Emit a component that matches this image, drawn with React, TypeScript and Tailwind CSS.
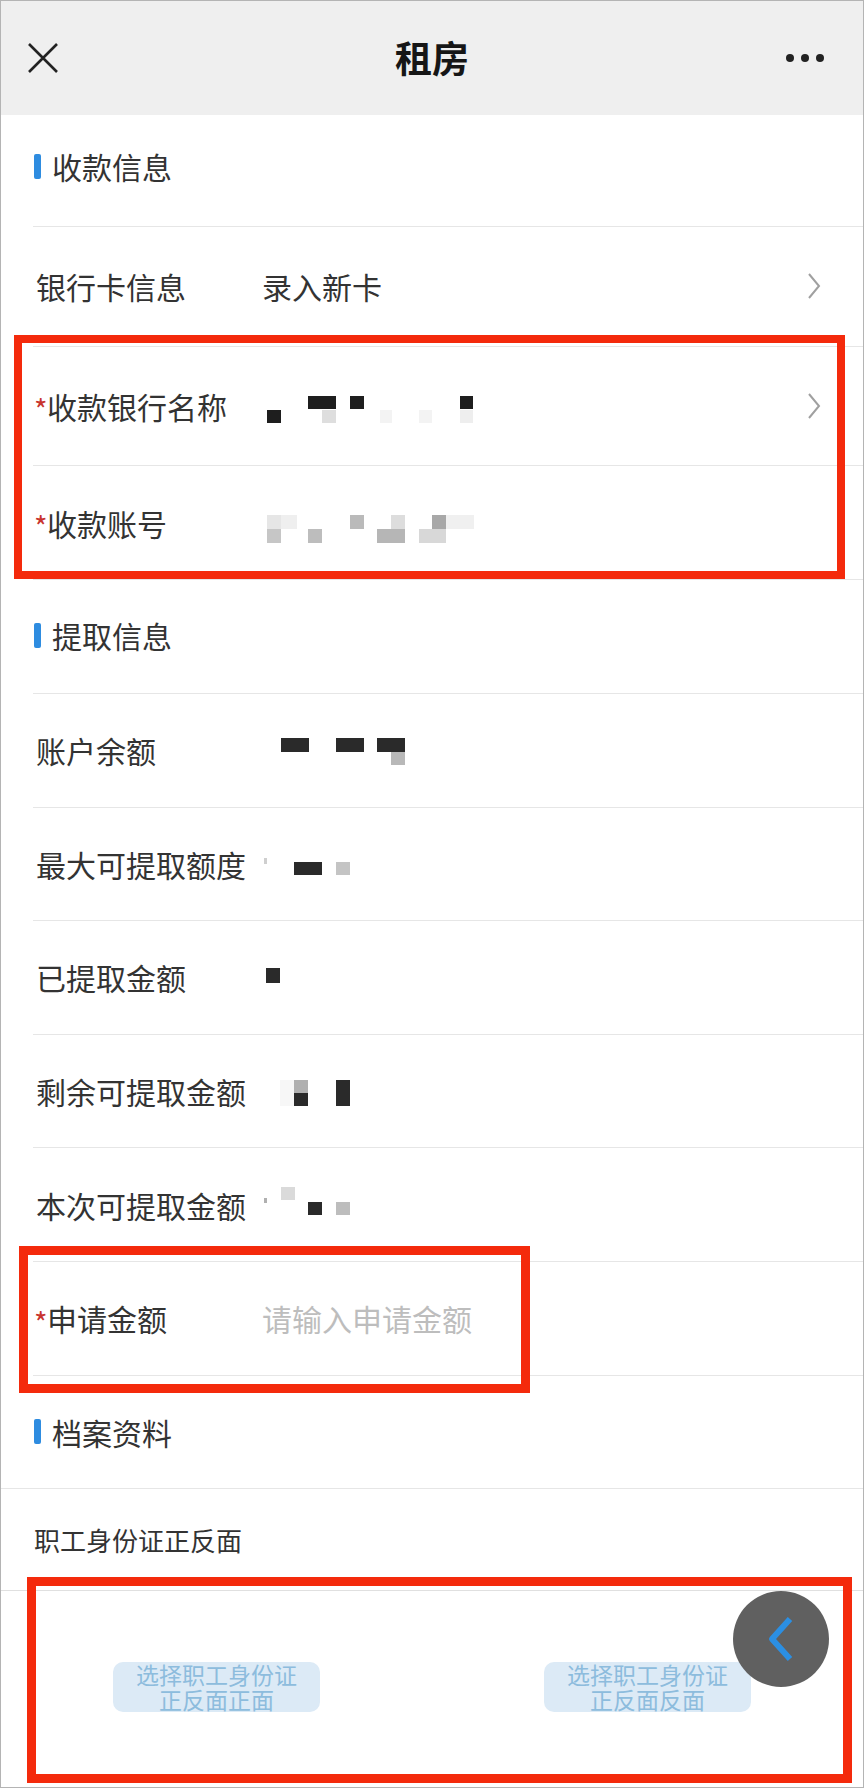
import React from 'react';

type Cell = [number, number, number, number, string];

const FONT = { fontFamily: '"Noto Sans CJK SC", "Noto Sans", sans-serif' };

function Mosaic({ cells }: { cells: Cell[] }) {
  return (
    <svg width="240" height="40" viewBox="0 0 240 40" className="shrink-0">
      {cells.map(([x, y, w, h, c], i) => (
        <rect key={i} x={x} y={y} width={w} height={h} fill={c} />
      ))}
    </svg>
  );
}

function Chevron() {
  return (
    <svg width="16" height="28" viewBox="0 0 16 28" className="ml-auto shrink-0">
      <path d="M3 2 L13 14 L3 26" fill="none" stroke="#a0a0a0" strokeWidth="2" />
    </svg>
  );
}

function Section({ title, h, full }: { title: string; h: string; full?: boolean }) {
  return (
    <div
      className={
        full
          ? `flex ${h} items-center border-b border-[#e6e6e6] pl-[33px]`
          : `ml-[32px] flex ${h} items-center border-b border-[#e6e6e6] pl-[1px]`
      }
    >
      <span className="mr-[11px] h-[25px] w-[7px] rounded-[2px] bg-[#2e8ce0]" />
      <span className="text-[30px] leading-none text-[#333]">{title}</span>
    </div>
  );
}

function Row({
  label,
  h,
  required,
  children,
  arrow,
}: {
  label: string;
  h: string;
  required?: boolean;
  children?: React.ReactNode;
  arrow?: boolean;
}) {
  return (
    <div className={`ml-[32px] flex ${h} items-center border-b border-[#e6e6e6] pl-[3px] pr-[41px]`}>
      <div className="flex w-[226px] shrink-0 items-center">
        {required && (
          <span className="-ml-[2px] w-[13px] translate-y-[3px] text-[29px] leading-none text-[#c8342f]">*</span>
        )}
        <span className="text-[30px] leading-none text-[#333]">{label}</span>
      </div>
      {children}
      {arrow && <Chevron />}
    </div>
  );
}

function UploadBtn({ line2 }: { line2: string }) {
  return (
    <div className="flex flex-1 items-center justify-center">
      <div className="flex h-[50px] w-[207px] flex-col items-center justify-center rounded-[10px] bg-[#dceaf6] text-[23px] leading-[25px] text-[#8dbcdd]">
        <span>选择职工身份证</span>
        <span>{line2}</span>
      </div>
    </div>
  );
}

export default function App() {
  return (
    <div className="relative h-[1788px] w-[864px] overflow-hidden border-x border-y border-[#b4b4b4] bg-white" style={FONT}>
      {/* header */}
      <div className="relative flex h-[114px] items-center justify-between bg-[#efefef] px-[27px]">
        <svg width="30" height="30" viewBox="0 0 30 30">
          <path d="M1 1 L29 29 M29 1 L1 29" stroke="#222" strokeWidth="2.6" />
        </svg>
        <span className="absolute left-1/2 -translate-x-1/2 text-[37px] font-semibold text-[#161616]">租房</span>
        <div className="mr-[12px] flex gap-[7px]">
          <span className="h-[8px] w-[8px] rounded-full bg-[#222]" />
          <span className="h-[8px] w-[8px] rounded-full bg-[#222]" />
          <span className="h-[8px] w-[8px] rounded-full bg-[#222]" />
        </div>
      </div>

      <Section title="收款信息" h="h-[112px] pb-[9px]" />
      <Row label="银行卡信息" h="h-[119.5px]" arrow>
        <span className="text-[30px] leading-none text-[#333]">录入新卡</span>
      </Row>
      <Row label="收款银行名称" h="h-[119.5px]" required arrow>
        <Mosaic
          cells={[
            [5, 24, 14, 13, '#1e1e1e'],
            [46, 10, 28, 13, '#1e1e1e'],
            [60, 24, 14, 13, '#dedede'],
            [88, 10, 14, 13, '#1e1e1e'],
            [118, 24, 12, 13, '#f3f3f3'],
            [157, 24, 13, 13, '#f3f3f3'],
            [198, 10, 13, 13, '#1e1e1e'],
            [198, 24, 13, 13, '#eeeeee'],
          ]}
        />
      </Row>
      <Row label="收款账号" h="h-[114px]" required>
        <Mosaic
          cells={[
            [5, 12, 14, 14, '#e6e6e6'],
            [5, 26, 14, 14, '#c6c6c6'],
            [19, 12, 16, 14, '#efefef'],
            [46, 26, 14, 14, '#bdbdbd'],
            [88, 12, 14, 14, '#bababa'],
            [115, 26, 28, 14, '#b6b6b6'],
            [129, 12, 14, 14, '#dddddd'],
            [157, 26, 27, 14, '#d8d8d8'],
            [170, 12, 14, 14, '#a8a8a8'],
            [184, 12, 28, 14, '#f0f0f0'],
          ]}
        />
      </Row>

      <Section title="提取信息" h="h-[114px] pb-[3px]" />
      <Row label="账户余额" h="h-[113.6px]">
        <Mosaic
          cells={[
            [19, 8, 28, 14, '#2a2a2a'],
            [74, 8, 28, 14, '#2a2a2a'],
            [115, 8, 28, 14, '#2a2a2a'],
            [129, 22, 14, 13, '#b8b8b8'],
          ]}
        />
      </Row>
      <Row label="最大可提取额度" h="h-[113.6px]">
        <Mosaic
          cells={[
            [2, 14, 3, 6, '#cfcfcf'],
            [32, 18, 28, 13, '#2a2a2a'],
            [74, 18, 14, 13, '#c4c4c4'],
          ]}
        />
      </Row>
      <Row label="已提取金额" h="h-[113.6px]">
        <Mosaic cells={[[4, 11, 14, 15, '#2a2a2a']]} />
      </Row>
      <Row label="剩余可提取金额" h="h-[113.6px]">
        <Mosaic
          cells={[
            [32, 9, 14, 13, '#b0b0b0'],
            [32, 22, 14, 13, '#2a2a2a'],
            [74, 9, 14, 26, '#2a2a2a'],
            [18, 9, 14, 26, '#f7f7f7'],
          ]}
        />
      </Row>
      <Row label="本次可提取金额" h="h-[113.6px]">
        <Mosaic
          cells={[
            [2, 13, 3, 5, '#b0b0b0'],
            [19, 2, 14, 13, '#dadada'],
            [46, 17, 14, 13, '#2a2a2a'],
            [74, 17, 14, 13, '#bdbdbd'],
          ]}
        />
      </Row>
      <Row label="申请金额" h="h-[113.6px]" required>
        <span className="text-[30px] leading-none text-[#bdbdbd]">请输入申请金额</span>
      </Row>

      <Section title="档案资料" h="h-[113.6px]" full />
      <div className="flex h-[102px] items-center border-b border-[#e0e0e0] pl-[33px]">
        <span className="text-[26px] leading-none text-[#333]">职工身份证正反面</span>
      </div>
      <div className="flex h-[192px] items-center">
        <UploadBtn line2="正反面正面" />
        <UploadBtn line2="正反面反面" />
      </div>

      {/* floating back button */}
      <div className="absolute left-[732px] top-[1590px] flex h-[96px] w-[96px] items-center justify-center rounded-full bg-[#606060]">
        <svg width="30" height="46" viewBox="0 0 30 46">
          <path d="M24 3 L6 23 L24 43" fill="none" stroke="#2b8fe3" strokeWidth="6" strokeLinejoin="round" />
        </svg>
      </div>

      {/* red annotation boxes */}
      <div className="pointer-events-none absolute left-[13px] top-[334px] h-[244px] w-[831px] border-[8px] border-[#f42a0c]" />
      <div className="pointer-events-none absolute left-[18px] top-[1245px] h-[147px] w-[511px] border-[9px] border-[#f42a0c]" />
      <div className="pointer-events-none absolute left-[26px] top-[1576px] h-[206px] w-[825px] border-[9px] border-[#f42a0c]" />
    </div>
  );
}
